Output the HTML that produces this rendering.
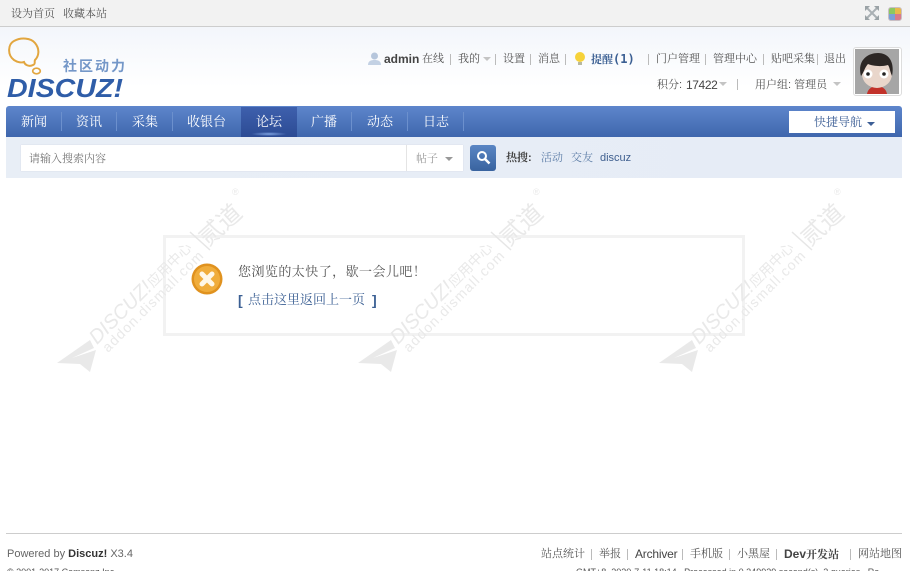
<!DOCTYPE html>
<html lang="zh"><head><meta charset="utf-8"><title>Discuz</title>
<style>
html,body{margin:0;padding:0;width:910px;height:571px;overflow:hidden;background:#fff}
body{position:relative;font:12px/16px "Liberation Sans","Noto Serif CJK SC",serif;color:#555}
.t{position:absolute;white-space:nowrap}
.sep{position:absolute;width:1px;background:#bbb}
.navs{position:absolute;top:112px;width:1px;height:19px;background:#6c90cd}
.nav{position:absolute;top:114px;color:#fff;font-size:13px;line-height:16px;white-space:nowrap}
.tri{position:absolute;width:0;height:0;border-style:solid;border-width:4px 4px 0;border-color:#c4c4c4 transparent transparent}
.w{fill:#e9e9e9}
</style></head><body>
<div style="position:absolute;left:0;top:0;width:910px;height:26px;background:#f2f2f2;border-bottom:1px solid #cdcdcd"></div>
<div style="position:absolute;left:0;top:27px;width:910px;height:60px;background:linear-gradient(#f3f6fb,#fff)"></div>
<span class="t" style="left:11px;top:6px;font-size:11px">设为首页</span>
<span class="t" style="left:63px;top:6px;font-size:11px">收藏本站</span>
<svg style="position:absolute;left:865px;top:6px" width="14" height="14" viewBox="0 0 14 14"><path d="M1 1l12 12M13 1L1 13" stroke="#aab0b4" stroke-width="2"/><path d="M0 0h5L0 5zM14 0v5L9 0zM0 14v-5l5 5zM14 14H9l5-5z" fill="#9aa2a6"/></svg>
<div style="position:absolute;left:888px;top:7px;width:12px;height:12px;border:1px solid #c9bfc4;border-radius:3px;background:conic-gradient(#e8b94a 0 25%,#d97a8a 25% 50%,#7aa0d8 50% 75%,#8cc860 75%)"></div>

<!-- logo -->
<svg style="position:absolute;left:7px;top:37px" width="122" height="62" viewBox="0 0 122 62"><path d="M7 23C0 18 1 7 7 4c7-4 17-3 21 2 5 6 4 13 0 17-1 2 1 4-2 5-4 2-8 0-9-3-3 1-7 0-10-2z" fill="none" stroke="#e2a63f" stroke-width="2"/><ellipse cx="29.500" cy="34" rx="3.800" ry="2.800" fill="none" stroke="#e2a63f" stroke-width="1.700"/><text x="0" y="60" font-family="Liberation Sans" font-size="26" font-weight="bold" font-style="italic" fill="#2f5da8" textLength="116" lengthAdjust="spacingAndGlyphs">DISCUZ!</text></svg>
<span class="t" style="left:63px;top:58px;font-family:'WenQuanYi Zen Hei','Noto Sans CJK SC',sans-serif;font-size:14px;letter-spacing:2px;font-weight:bold;color:#7497c8">社区动力</span>

<!-- user links -->
<svg style="position:absolute;left:368px;top:52px" width="13" height="14" viewBox="0 0 13 14"><circle cx="6.500" cy="4" r="3.500" fill="#b6c6dc"/><path d="M0 13c0-4 3-5 6.500-5S13 9 13 13z" fill="#c3d1e4"/></svg>
<span class="t" style="left:384px;top:51px;font-weight:bold;color:#444">admin</span>
<span class="t" style="left:422px;top:51px;font-size:11px">在线</span>
<div class="sep" style="left:450px;top:54px;height:11px"></div>
<span class="t" style="left:458px;top:51px;font-size:11px">我的</span>
<div class="tri" style="left:483px;top:57px"></div>
<div class="sep" style="left:495px;top:54px;height:11px"></div>
<span class="t" style="left:503px;top:51px;font-size:11px">设置</span>
<div class="sep" style="left:530px;top:54px;height:11px"></div>
<span class="t" style="left:538px;top:51px;font-size:11px">消息</span>
<div class="sep" style="left:565px;top:54px;height:11px"></div>
<svg style="position:absolute;left:574px;top:52px" width="12" height="14" viewBox="0 0 12 14"><circle cx="6" cy="5" r="5" fill="#f6d23a"/><rect x="4" y="10" width="4" height="3" fill="#b8b8a0"/></svg>
<span class="t" style="left:591px;top:51px;font-weight:bold;color:#3b5f93;font-size:11px">提醒<span style="font-size:12px;font-family:'DejaVu Sans Mono','Liberation Mono',monospace">(1)</span></span>
<div class="sep" style="left:648px;top:54px;height:11px"></div>
<span class="t" style="left:656px;top:51px;font-size:11px">门户管理</span>
<div class="sep" style="left:705px;top:54px;height:11px"></div>
<span class="t" style="left:713px;top:51px;font-size:11px">管理中心</span>
<div class="sep" style="left:763px;top:54px;height:11px"></div>
<span class="t" style="left:771px;top:51px;font-size:11px">贴吧采集</span>
<div class="sep" style="left:817px;top:54px;height:11px"></div>
<span class="t" style="left:824px;top:51px;font-size:11px">退出</span>
<span class="t" style="left:657px;top:77px;font-size:11px">积分:</span>
<span class="t" style="left:686px;top:77px;letter-spacing:-.4px;color:#444">17422</span>
<div class="tri" style="left:719px;top:82px"></div>
<div class="sep" style="left:737px;top:79px;height:11px"></div>
<span class="t" style="left:755px;top:77px;font-size:11px">用户组: 管理员</span>
<div class="tri" style="left:833px;top:82px"></div>

<!-- avatar -->
<div style="position:absolute;left:853px;top:47px;width:47px;height:47px;border:1px solid #ddd;border-radius:3px;background:#fff"></div>
<svg style="position:absolute;left:855px;top:49px" width="44" height="45" viewBox="0 0 44 45"><rect width="44" height="45" fill="#a6a6a6"/><path d="M12 45c1-6 6-8 10-8s9 2 10 8z" fill="#c2322a"/><ellipse cx="22" cy="25" rx="15" ry="14" fill="#e9d6cb"/><path d="M6 27C2 12 12 4 23 4c10 0 17 8 14 23-2-4-2-8-4-11-7 2-15 1-20-1-3 3-4 8-7 12z" fill="#2c2725"/><circle cx="13" cy="25" r="4.500" fill="#fff"/><circle cx="29" cy="25" r="4.500" fill="#fff"/><circle cx="13" cy="25" r="1.800" fill="#222"/><circle cx="29" cy="25" r="1.800" fill="#222"/></svg>

<!-- nav -->
<div style="position:absolute;left:6px;top:106px;width:896px;height:31px;border-radius:3px 3px 0 0;background:linear-gradient(#5e86cc,#3f66ad)"></div>
<div style="position:absolute;left:241px;top:107px;width:56px;height:30px;background:radial-gradient(ellipse 18px 2px at 50% 27px,#7fa4e2,transparent),linear-gradient(#3e60ad,#2c4b94)"></div>
<span class="nav" style="left:21px">新闻</span><div class="navs" style="left:61px"></div>
<span class="nav" style="left:76px">资讯</span><div class="navs" style="left:116px"></div>
<span class="nav" style="left:132px">采集</span><div class="navs" style="left:172px"></div>
<span class="nav" style="left:187px">收银台</span>
<span class="nav" style="left:256px">论坛</span>
<span class="nav" style="left:311px">广播</span><div class="navs" style="left:351px"></div>
<span class="nav" style="left:367px">动态</span><div class="navs" style="left:407px"></div>
<span class="nav" style="left:423px">日志</span><div class="navs" style="left:463px"></div>
<div style="position:absolute;left:789px;top:111px;width:106px;height:22px;background:#fff"></div>
<span class="t" style="left:814px;top:114px;color:#3d5f96">快捷导航</span>
<div class="tri" style="left:867px;top:122px;border-color:#3d5f96 transparent transparent"></div>

<!-- search -->
<div style="position:absolute;left:6px;top:137px;width:896px;height:41px;background:linear-gradient(90deg,#e8eef6,#e6ecf6)"></div>
<div style="position:absolute;left:21px;top:145px;width:442px;height:26px;background:#fff;box-shadow:0 0 1px #ccd"></div>
<div class="sep" style="left:406px;top:145px;height:26px;background:#e4e4e4"></div>
<span class="t" style="left:29px;top:151px;font-size:11px;color:#777">请输入搜索内容</span>
<span class="t" style="left:416px;top:151px;font-size:11px;color:#999">帖子</span>
<div class="tri" style="left:445px;top:157px;border-color:#999 transparent transparent"></div>
<div style="position:absolute;left:470px;top:145px;width:26px;height:26px;border-radius:3px;background:linear-gradient(#5a86c4,#39639f)"></div>
<svg style="position:absolute;left:476px;top:150px" width="15" height="15" viewBox="0 0 15 15"><circle cx="6" cy="6" r="4" fill="none" stroke="#fff" stroke-width="2"/><path d="M9 9l4.500 4.500" stroke="#fff" stroke-width="2.500"/></svg>
<span class="t" style="left:506px;top:150px;font-size:11px;font-weight:bold;color:#444">热搜:</span>
<span class="t" style="left:541px;top:150px;font-size:11px;color:#5f7fa8">活动</span>
<span class="t" style="left:571px;top:150px;font-size:11px;color:#5f7fa8">交友</span>
<span class="t" style="left:600px;top:150px;font-size:11px;color:#3f5f8f">discuz</span>

<!-- message box -->
<div style="position:absolute;left:163px;top:235px;width:576px;height:95px;border:3px solid #f2f2f2"></div>

<!-- watermarks -->
<svg style="position:absolute;left:0;top:180px" width="910" height="210" viewBox="0 0 910 210">
<g class="w">
<path d="M57 183L90 160l4 8-22 10 24-8-6 22-10-8z"/>
<text transform="translate(97 165) rotate(-45)" font-family="Liberation Sans" font-size="20" font-style="italic" textLength="79" lengthAdjust="spacingAndGlyphs">DISCUZ!</text>
<text transform="translate(108 173) rotate(-45)" font-family="Liberation Sans" font-size="14" textLength="136">addon.dismall.com</text>
<text transform="translate(153 108) rotate(-45)" font-family="WenQuanYi Zen Hei,sans-serif" font-size="14">应用中心</text>
<path d="M190 52l20 18" stroke="#e6e6e6" stroke-width="1.500"/>
<text transform="translate(208 67) rotate(-42)" font-family="WenQuanYi Zen Hei,sans-serif" font-size="24">贰道</text>
<text x="232" y="15" font-family="Liberation Sans" font-size="9">®</text>
</g>
<g class="w" transform="translate(301 0)">
<path d="M57 183L90 160l4 8-22 10 24-8-6 22-10-8z"/>
<text transform="translate(97 165) rotate(-45)" font-family="Liberation Sans" font-size="20" font-style="italic" textLength="79" lengthAdjust="spacingAndGlyphs">DISCUZ!</text>
<text transform="translate(108 173) rotate(-45)" font-family="Liberation Sans" font-size="14" textLength="136">addon.dismall.com</text>
<text transform="translate(153 108) rotate(-45)" font-family="WenQuanYi Zen Hei,sans-serif" font-size="14">应用中心</text>
<path d="M190 52l20 18" stroke="#e6e6e6" stroke-width="1.500"/>
<text transform="translate(208 67) rotate(-42)" font-family="WenQuanYi Zen Hei,sans-serif" font-size="24">贰道</text>
<text x="232" y="15" font-family="Liberation Sans" font-size="9">®</text>
</g>
<g class="w" transform="translate(602 0)">
<path d="M57 183L90 160l4 8-22 10 24-8-6 22-10-8z"/>
<text transform="translate(97 165) rotate(-45)" font-family="Liberation Sans" font-size="20" font-style="italic" textLength="79" lengthAdjust="spacingAndGlyphs">DISCUZ!</text>
<text transform="translate(108 173) rotate(-45)" font-family="Liberation Sans" font-size="14" textLength="136">addon.dismall.com</text>
<text transform="translate(153 108) rotate(-45)" font-family="WenQuanYi Zen Hei,sans-serif" font-size="14">应用中心</text>
<path d="M190 52l20 18" stroke="#e6e6e6" stroke-width="1.500"/>
<text transform="translate(208 67) rotate(-42)" font-family="WenQuanYi Zen Hei,sans-serif" font-size="24">贰道</text>
<text x="232" y="15" font-family="Liberation Sans" font-size="9">®</text>
</g>
</svg>

<svg style="position:absolute;left:191px;top:263px" width="32" height="32" viewBox="0 0 32 32"><circle cx="16" cy="16" r="15.500" fill="#e0921f"/><circle cx="16" cy="16" r="13" fill="#f0ad3c"/><path d="M11 11l10 10M21 11l-10 10" stroke="#fff8e8" stroke-width="5" stroke-linecap="round"/></svg>
<span class="t" style="left:238px;top:264px;font-size:13px;letter-spacing:.45px;color:#555">您浏览的太快了，歇一会儿吧！</span>
<b class="t" style="left:238px;top:292px;font-size:14px;color:#3b5f93">[</b>
<span class="t" style="left:248px;top:292px;font-size:13px;color:#3b5f93">点击这里返回上一页</span>
<b class="t" style="left:372px;top:292px;font-size:14px;color:#3b5f93">]</b>

<!-- footer -->
<div style="position:absolute;left:6px;top:533px;width:896px;height:1px;background:#cdcdcd"></div>
<span class="t" style="left:7px;top:546px;font-size:11px;color:#666">Powered by <b style="color:#333">Discuz!</b> X3.4</span>
<span class="t" style="left:7px;top:566px;font-size:9px;line-height:12px;color:#555">© 2001-2017 Comsenz Inc.</span>
<span class="t" style="left:541px;top:546px;font-size:11px">站点统计</span>
<div class="sep" style="left:591px;top:549px;height:11px"></div>
<span class="t" style="left:599px;top:546px;font-size:11px">举报</span>
<div class="sep" style="left:627px;top:549px;height:11px"></div>
<span class="t" style="left:635px;top:546px;color:#444;letter-spacing:-.2px">Archiver</span>
<div class="sep" style="left:682px;top:549px;height:11px"></div>
<span class="t" style="left:690px;top:546px;font-size:11px">手机版</span>
<div class="sep" style="left:729px;top:549px;height:11px"></div>
<span class="t" style="left:737px;top:546px;font-size:11px">小黑屋</span>
<div class="sep" style="left:776px;top:549px;height:11px"></div>
<span class="t" style="left:784px;top:546px;font-weight:bold;color:#444">Dev<span style="font-size:11px">开发站</span></span>
<div class="sep" style="left:850px;top:549px;height:11px"></div>
<span class="t" style="left:858px;top:546px;font-size:11px">网站地图</span>
<span class="t" style="left:576px;top:566px;font-size:9px;line-height:12px;color:#555">GMT+8, 2020-7-11 18:14 , Processed in 0.249929 second(s), 2 queries , Re</span>
</body></html>
